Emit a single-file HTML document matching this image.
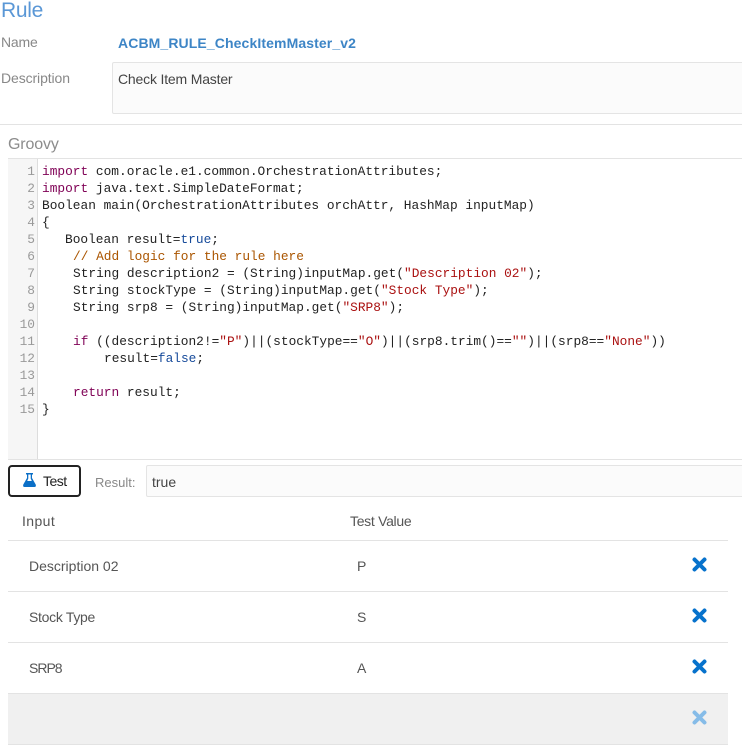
<!DOCTYPE html>
<html><head><meta charset="utf-8"><style>
html,body{margin:0;padding:0;background:#fff}
body{width:742px;height:750px;position:relative;overflow:hidden;font-family:"Liberation Sans",sans-serif;font-size:14px;color:#333}
.a{position:absolute;white-space:pre;line-height:20px}
.l{position:absolute;left:0;height:1px;background:#e3e3e3}
.c{position:absolute;left:42px;white-space:pre;font-family:"Liberation Mono",monospace;font-size:12.83px;line-height:17px;color:#222}
.n{position:absolute;left:8px;width:27px;text-align:right;font-family:"Liberation Mono",monospace;font-size:12.83px;line-height:17px;color:#999}
.k{color:#7f0055}.b{color:#164a9a}.s{color:#a11}.m{color:#a50}
svg{position:absolute}
</style></head><body>
<div class="a" style="left:1px;top:-2px;font-size:21px;letter-spacing:-.3px;line-height:26px;color:#5a97d6">Rule</div>
<div class="a" style="left:1px;top:32px;letter-spacing:-.2px;color:#888">Name</div>
<div class="a" style="left:118px;top:33px;font-weight:bold;letter-spacing:.11px;color:#3d85c6">ACBM_RULE_CheckItemMaster_v2</div>
<div class="a" style="left:1px;top:68px;letter-spacing:-.1px;color:#888">Description</div>
<div style="position:absolute;left:112px;top:62px;width:640px;height:52px;box-sizing:border-box;border:1px solid #e4e4e4;border-radius:2px;background:#fbfbfb"></div>
<div class="a" style="left:118px;top:69px;letter-spacing:-.18px;color:#444">Check Item Master</div>
<div class="l" style="top:124px;width:742px"></div>
<div class="a" style="left:8px;top:135px;font-size:16px;letter-spacing:-.15px;color:#8c8c8c">Groovy</div>
<div class="l" style="left:8px;top:158px;width:734px"></div>
<div style="position:absolute;left:8px;top:159px;width:29px;height:300px;background:#f6f6f6;border-right:1px solid #ddd"></div>
<div class="l" style="left:8px;top:459px;width:734px"></div>
<div class="n" style="top:163px">1</div><div class="n" style="top:180px">2</div><div class="n" style="top:197px">3</div><div class="n" style="top:214px">4</div><div class="n" style="top:231px">5</div><div class="n" style="top:248px">6</div><div class="n" style="top:265px">7</div><div class="n" style="top:282px">8</div><div class="n" style="top:299px">9</div><div class="n" style="top:316px">10</div><div class="n" style="top:333px">11</div><div class="n" style="top:350px">12</div><div class="n" style="top:367px">13</div><div class="n" style="top:384px">14</div><div class="n" style="top:401px">15</div>
<div class="c" style="top:163px"><span class="k">import</span> com.oracle.e1.common.OrchestrationAttributes;</div>
<div class="c" style="top:180px"><span class="k">import</span> java.text.SimpleDateFormat;</div>
<div class="c" style="top:197px">Boolean main(OrchestrationAttributes orchAttr, HashMap inputMap)</div>
<div class="c" style="top:214px">{</div>
<div class="c" style="top:231px;left:65px">Boolean result=<span class="b">true</span>;</div>
<div class="c" style="top:248px;left:73px"><span class="m">// Add logic for the rule here</span></div>
<div class="c" style="top:265px;left:73px">String description2 = (String)inputMap.get(<span class="s">"Description 02"</span>);</div>
<div class="c" style="top:282px;left:73px">String stockType = (String)inputMap.get(<span class="s">"Stock Type"</span>);</div>
<div class="c" style="top:299px;left:73px">String srp8 = (String)inputMap.get(<span class="s">"SRP8"</span>);</div>
<div class="c" style="top:333px;left:73px"><span class="k">if</span> ((description2!=<span class="s">"P"</span>)||(stockType==<span class="s">"O"</span>)||(srp8.trim()==<span class="s">""</span>)||(srp8==<span class="s">"None"</span>))</div>
<div class="c" style="top:350px;left:104px">result=<span class="b">false</span>;</div>
<div class="c" style="top:384px;left:73px"><span class="k">return</span> result;</div>
<div class="c" style="top:401px">}</div>
<div style="position:absolute;left:8px;top:465px;width:73px;height:32px;box-sizing:border-box;border:2px solid #222;border-radius:4px;background:#fff"></div>
<svg style="left:23px;top:473px" width="13" height="14" viewBox="0 0 13 14"><path d="M3 0h7v1.500H9V5l3.700 6.500q.7 2.300-1.200 2.500h-10Q-.4 13.800.3 11.500L4 5V1.500H3zM5.300 1.500V5.500L4.200 8h4.600L7.700 5.500v-4z" fill="#0b6fc7" fill-rule="evenodd"/></svg>
<div class="a" style="left:43px;top:471px;letter-spacing:-.5px;color:#222">Test</div>
<div class="a" style="left:95px;top:473px;font-size:13px;color:#888">Result:</div>
<div style="position:absolute;left:146px;top:465px;width:600px;height:32px;box-sizing:border-box;border:1px solid #e4e4e4;border-radius:2px;background:#fbfbfb"></div>
<div class="a" style="left:152px;top:472px;color:#444">true</div>
<div class="a" style="left:22px;top:511px;letter-spacing:.4px;color:#555">Input</div>
<div class="a" style="left:350px;top:511px;letter-spacing:-.3px;color:#555">Test Value</div>
<div style="position:absolute;left:8px;top:694px;width:720px;height:50px;background:#f0f0f0"></div>
<div class="l" style="left:8px;top:540px;width:720px"></div>
<div class="l" style="left:8px;top:591px;width:720px"></div>
<div class="l" style="left:8px;top:642px;width:720px"></div>
<div class="l" style="left:8px;top:693px;width:720px"></div>
<div class="l" style="left:8px;top:744px;width:720px"></div>
<div class="a" style="left:29px;top:556px;color:#555">Description 02</div>
<div class="a" style="left:357px;top:556px;color:#555">P</div>
<div class="a" style="left:29px;top:607px;letter-spacing:-.3px;color:#555">Stock Type</div>
<div class="a" style="left:357px;top:607px;letter-spacing:0;color:#555">S</div>
<div class="a" style="left:29px;top:658px;letter-spacing:-1px;color:#555">SRP8</div>
<div class="a" style="left:357px;top:658px;color:#555">A</div>
<svg style="left:691.500px;top:556.500px" width="15" height="15" viewBox="0 0 15 15"><path d="M2.500 2.500l10 10M12.500 2.500l-10 10" stroke="#0772cc" stroke-width="4" stroke-linecap="round"/></svg>
<svg style="left:691.500px;top:607.500px" width="15" height="15" viewBox="0 0 15 15"><path d="M2.500 2.500l10 10M12.500 2.500l-10 10" stroke="#0772cc" stroke-width="4" stroke-linecap="round"/></svg>
<svg style="left:691.500px;top:658.500px" width="15" height="15" viewBox="0 0 15 15"><path d="M2.500 2.500l10 10M12.500 2.500l-10 10" stroke="#0772cc" stroke-width="4" stroke-linecap="round"/></svg>
<svg style="left:691.500px;top:709.500px" width="15" height="15" viewBox="0 0 15 15"><path d="M2.500 2.500l10 10M12.500 2.500l-10 10" stroke="#86bce8" stroke-width="4" stroke-linecap="round"/></svg>
</body></html>
